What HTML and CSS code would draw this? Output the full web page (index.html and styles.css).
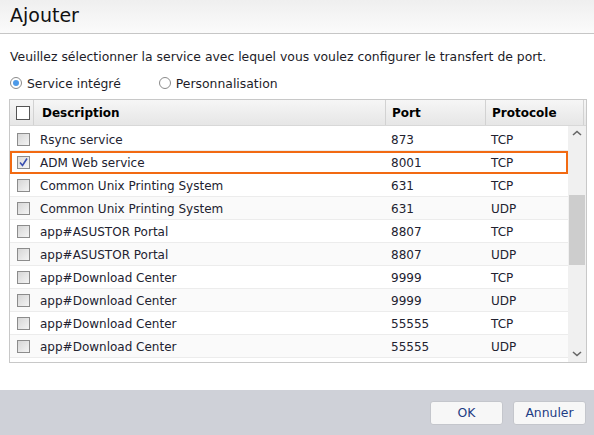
FILE: index.html
```html
<!DOCTYPE html>
<html>
<head>
<meta charset="utf-8">
<link rel="stylesheet" href="styles.css">
</head>
<body>
<div class="dialog">
  <div class="titlebar">Ajouter</div>
  <div class="content">
    <p class="intro">Veuillez sélectionner la service avec lequel vous voulez configurer le transfert de port.</p>
    <div class="radios">
      <label class="radio"><span class="dot on"></span>Service intégré</label>
      <label class="radio"><span class="dot"></span>Personnalisation</label>
    </div>
    <div class="grid">
      <div class="head">
        <div class="c-chk"><span class="hbox"></span></div>
        <div class="c-desc">Description</div>
        <div class="c-port">Port</div>
        <div class="c-proto">Protocole</div>
        <div class="c-pad"></div>
      </div>
      <div class="body">
        <div class="rows">
          <div class="row"><div class="c-chk"><span class="box"></span></div><div class="c-desc">Rsync service</div><div class="c-port">873</div><div class="c-proto">TCP</div></div>
          <div class="row alt sel"><div class="c-chk"><span class="box checked"><svg viewBox="0 0 13 13" width="13" height="13"><path d="M3 6.5 L5.5 9.5 L10 2.5" fill="none" stroke="#3a4fb0" stroke-width="1.6"/></svg></span></div><div class="c-desc">ADM Web service</div><div class="c-port">8001</div><div class="c-proto">TCP</div></div>
          <div class="row"><div class="c-chk"><span class="box"></span></div><div class="c-desc">Common Unix Printing System</div><div class="c-port">631</div><div class="c-proto">TCP</div></div>
          <div class="row alt"><div class="c-chk"><span class="box"></span></div><div class="c-desc">Common Unix Printing System</div><div class="c-port">631</div><div class="c-proto">UDP</div></div>
          <div class="row"><div class="c-chk"><span class="box"></span></div><div class="c-desc">app#ASUSTOR Portal</div><div class="c-port">8807</div><div class="c-proto">TCP</div></div>
          <div class="row alt"><div class="c-chk"><span class="box"></span></div><div class="c-desc">app#ASUSTOR Portal</div><div class="c-port">8807</div><div class="c-proto">UDP</div></div>
          <div class="row"><div class="c-chk"><span class="box"></span></div><div class="c-desc">app#Download Center</div><div class="c-port">9999</div><div class="c-proto">TCP</div></div>
          <div class="row alt"><div class="c-chk"><span class="box"></span></div><div class="c-desc">app#Download Center</div><div class="c-port">9999</div><div class="c-proto">UDP</div></div>
          <div class="row"><div class="c-chk"><span class="box"></span></div><div class="c-desc">app#Download Center</div><div class="c-port">55555</div><div class="c-proto">TCP</div></div>
          <div class="row alt"><div class="c-chk"><span class="box"></span></div><div class="c-desc">app#Download Center</div><div class="c-port">55555</div><div class="c-proto">UDP</div></div>
          <div class="row"><div class="c-chk"><span class="box"></span></div><div class="c-desc"></div><div class="c-port"></div><div class="c-proto"></div></div>
        </div>
        <div class="scrollbar">
          <svg class="arrow" viewBox="0 0 10 6" width="10" height="6"><path d="M1 5 L5 1.5 L9 5" fill="none" stroke="#666" stroke-width="1.6"/></svg>
          <div class="track"><div class="thumb"></div></div>
          <svg class="arrow" viewBox="0 0 10 6" width="10" height="6"><path d="M1 1 L5 4.5 L9 1" fill="none" stroke="#666" stroke-width="1.6"/></svg>
        </div>
      </div>
    </div>
  </div>
  <div class="footer">
    <button class="btn">OK</button>
    <button class="btn">Annuler</button>
  </div>
</div>
</body>
</html>
```
FILE: styles.css
```css
* { box-sizing: border-box; }
html, body { margin: 0; padding: 0; }
body {
  width: 594px;
  height: 435px;
  overflow: hidden;
  font-family: "DejaVu Sans", Verdana, sans-serif;
  font-size: 12px;
  color: #1d1d28;
  background: #fff;
}
.dialog { width: 594px; height: 435px; display: flex; flex-direction: column; }
.titlebar {
  height: 34px;
  padding: 4px 0 0 10px;
  font-size: 19px;
  color: #111;
  background: linear-gradient(#efefef, #fbfbfb);
  border-bottom: 1px solid #c6c6c6;
  font-family: "DejaVu Sans", Verdana, sans-serif;
}
.content { flex: 1; padding: 0 7px 0 9px; }
.intro { margin: 15px 0 0 1px; font-size: 12.4px; line-height: 16px; }
.radios { display: flex; gap: 38px; margin: 10px 0 0 1px; height: 16px; align-items: center; font-size: 12.4px; }
.radio { display: flex; align-items: center; gap: 5px; }
.dot {
  width: 12px; height: 12px; border-radius: 50%;
  border: 1px solid #8a8a8a; background: #fff;
  display: inline-flex; align-items: center; justify-content: center;
}
.dot.on::after {
  content: ""; width: 6px; height: 6px; border-radius: 50%;
  background: #4d9ae8;
}
.grid {
  margin-top: 8px;
  height: 264px;
  border: 1px solid #c8c8c8;
  display: flex; flex-direction: column;
  overflow: hidden;
}
.head {
  height: 26px;
  display: flex;
  align-items: stretch;
  background: linear-gradient(#f6f6f6, #e6e6e6);
  border-bottom: 1px solid #d8d8d8;
  font-weight: bold;
  color: #000;
  font-size: 12px;
}
.head > div { display: flex; align-items: center; border-right: 1px solid #d2d2d2; }
.head .c-desc { padding-left: 8px; }
.head .c-port { padding-left: 6px; }
.head .c-proto { padding-left: 6px; }
.head .c-pad { flex: 1; border-right: none; }
.c-chk { width: 24px; flex: none; display: flex; align-items: center; justify-content: center; }
.c-desc { width: 352px; flex: none; padding-left: 6px; }
.c-port { width: 100px; flex: none; padding-left: 5px; }
.c-proto { width: 98px; flex: none; padding-left: 5px; }
.hbox { width: 14px; height: 14px; border: 1px solid #555; background: #fff; margin-left: 2px; }
.body { flex: 1; display: flex; min-height: 0; }
.rows { flex: 1; overflow: hidden; padding-top: 2px; }
.row {
  height: 23px;
  display: flex;
  align-items: center;
  padding-top: 1px;
  border-bottom: 1px solid #ececec;
  background: #fff;
  color: #222230;
}
.row.alt { background: #fafafa; }
.row.sel { outline: 2px solid #f26a12; outline-offset: -2px; background: #fff; position: relative; }
.row .c-chk { padding-left: 2px; }
.box {
  width: 13px; height: 13px;
  border: 1px solid #8c8c8c;
  background: linear-gradient(135deg, #d6d6d6, #f4f4f4);
  display: inline-flex;
}
.box.checked { background: linear-gradient(135deg, #dcdcdc, #f6f6f6); }
.box svg { margin: -1px; }
.scrollbar {
  width: 18px; flex: none;
  background: #f0f0f0;
  display: flex; flex-direction: column; align-items: center;
  padding: 4px 0 5px;
}
.arrow { flex: none; }
.track { flex: 1; width: 100%; padding-top: 59px; }
.thumb { width: 16px; margin: 0 auto; height: 70px; background: #cdcdcd; }
.footer {
  height: 45px;
  background: #cfd1d8;
  display: flex;
  justify-content: flex-end;
  align-items: center;
  gap: 10px;
  padding: 0 8px 0 0;
}
.btn {
  width: 73px; height: 24px;
  font-family: "DejaVu Sans", Verdana, sans-serif;
  font-size: 12.4px;
  color: #1e3c84;
  background: #f7f7f7;
  border: 1px solid #c4c6cc;
  border-radius: 3px;
  padding: 0;
}
```
